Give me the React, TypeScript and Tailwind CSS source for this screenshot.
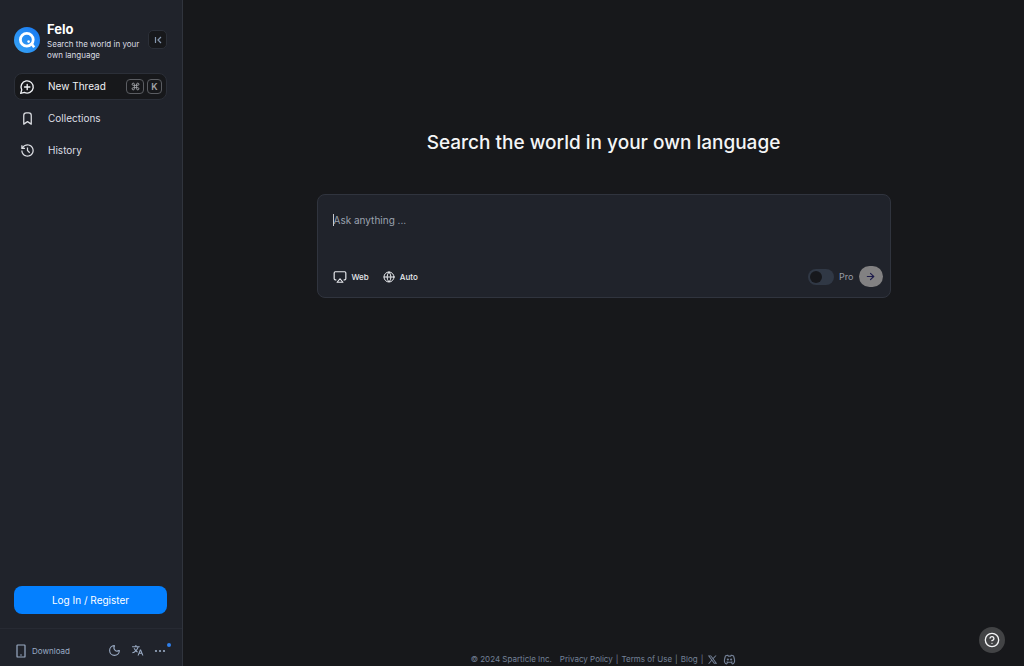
import { useState } from 'react';
import type { ReactNode } from 'react';
import { Airplay, ArrowRight, CircleHelp, Command, Globe, Moon } from 'lucide-react';
import { RiHistoryLine, RiTranslate2, RiTwitterXLine } from 'react-icons/ri';
import { TbBookmark, TbBrandDiscord } from 'react-icons/tb';

function Logo() {
  return (
    <svg viewBox="0 0 26 26" className="size-[26px] shrink-0" role="img" aria-label="Felo logo">
      <defs>
        <linearGradient id="logo-fill" x1="0" y1="1" x2="1" y2="0">
          <stop offset="0" stopColor="#38a5f5" />
          <stop offset="1" stopColor="#1777f2" />
        </linearGradient>
      </defs>
      <circle cx="13" cy="13" r="13" fill="url(#logo-fill)" />
      <circle cx="12.8" cy="12.8" r="6.4" fill="none" stroke="#fff" strokeWidth="2.8" />
      <path d="M17 16l3.2 4.2" stroke="#fff" strokeWidth="2.6" />
      <circle cx="14.6" cy="14.6" r="1.3" fill="#fff" />
    </svg>
  );
}

function NewThreadIcon() {
  return (
    <svg
      viewBox="0 0 24 24"
      className="mr-[13px] size-4"
      fill="none"
      stroke="currentColor"
      strokeWidth="2"
      strokeLinecap="round"
      strokeLinejoin="round"
      aria-hidden="true"
    >
      <path d="M2.5 21.5l1.6-5.1A9.2 9.2 0 1 1 8 20.2zM12.3 8v8M8.3 12h8" />
    </svg>
  );
}

function CollapseIcon() {
  return (
    <svg viewBox="0 0 10 10" className="size-[10px]" fill="none" stroke="currentColor" strokeWidth="1.2" aria-hidden="true">
      <path d="M2.5 2v6M8 2L5 5l3 3M5 5H4.4" />
    </svg>
  );
}

function PhoneIcon() {
  return (
    <svg viewBox="0 0 10 14" className="h-[14px] w-[10px]" fill="none" stroke="currentColor" strokeWidth="1.2" aria-hidden="true">
      <rect x="1" y="1" width="8" height="12" rx="0.6" />
      <path d="M4.2 11h1.6" />
    </svg>
  );
}

function DotsIcon() {
  return (
    <svg viewBox="0 0 12 4" className="h-1 w-3" fill="currentColor" aria-hidden="true">
      <circle cx="2" cy="2" r="1.1" />
      <circle cx="6" cy="2" r="1.1" />
      <circle cx="10" cy="2" r="1.1" />
    </svg>
  );
}

function Key({ children, wide = false }: { children: ReactNode; wide?: boolean }) {
  return (
    <kbd
      className={`flex h-[15px] items-center justify-center rounded-[4px] border border-[#5b5d62] font-['Inter',sans-serif] text-[9px] leading-none font-semibold text-[#a2a4a8] ${wide ? 'w-[18px]' : 'w-[15px]'}`}
    >
      {children}
    </kbd>
  );
}

function NavLink({ icon, label }: { icon: ReactNode; label: string }) {
  return (
    <a href="#" className="flex h-8 items-center gap-[13px] px-1.5 text-[10px] text-[#dcdee3]">
      {icon}
      {label}
    </a>
  );
}

function Sidebar() {
  return (
    <aside className="flex w-[183px] shrink-0 flex-col border-r border-[#30343d] bg-[#20232b]">
      <header className="flex items-start pt-[21px] pr-[15px] pl-3.5">
        <div className="pt-1.5">
          <Logo />
        </div>
        <div className="ml-[7px] w-[96px]">
          <h2 className="text-[13px] leading-4 font-bold text-white">Felo</h2>
          <p className="mt-0.5 text-[8px] leading-[11px] text-[#dcdee3]">Search the world in your own language</p>
        </div>
        <button
          type="button"
          aria-label="Collapse sidebar"
          className="mt-[9px] ml-auto flex size-[19px] items-center justify-center rounded-[5px] border border-[#2b2f38] bg-[#17181b] text-[#8596ad]"
        >
          <CollapseIcon />
        </button>
      </header>

      <nav className="mt-3 flex flex-col pr-[15px] pl-3.5" aria-label="Main">
        <a
          href="#"
          className="mb-0.5 flex h-[27px] items-center rounded-lg border border-[#2b2f38] bg-[#17181b] px-1 text-[10px] text-[#f0f2f5]"
        >
          <NewThreadIcon />
          New Thread
          <span className="ml-auto flex gap-[3px]">
            <Key wide>
              <Command className="size-[9px]" strokeWidth={2.4} aria-label="Command" />
            </Key>
            <Key>K</Key>
          </span>
        </a>
        <NavLink icon={<TbBookmark className="size-[15px]" />} label="Collections" />
        <NavLink icon={<RiHistoryLine className="size-[15px]" />} label="History" />
      </nav>

      <div className="mt-auto pr-[15px] pb-3.5 pl-3.5">
        <button type="button" className="h-7 w-full rounded-lg bg-[#0480ff] text-[10px] text-white">
          Log In / Register
        </button>
      </div>

      <footer className="flex h-[38px] items-center border-t border-[#272a33] pt-1.5 pr-3 pl-4 text-[#9aabc4]">
        <a href="#" className="flex items-center gap-1.5 text-[8px]">
          <PhoneIcon />
          Download
        </a>
        <div className="ml-auto flex items-center gap-2.5">
          <button type="button" aria-label="Toggle theme">
            <Moon className="size-[13px]" strokeWidth={2} />
          </button>
          <button type="button" aria-label="Change language">
            <RiTranslate2 className="size-[13px]" />
          </button>
          <button type="button" aria-label="More" className="relative flex h-[13px] w-4 items-center">
            <DotsIcon />
            <span className="absolute -top-px -right-px size-1 rounded-full bg-[#2f80ed]" />
          </button>
        </div>
      </footer>
    </aside>
  );
}

function SearchBox() {
  const [query, setQuery] = useState('');
  return (
    <form className="mt-[39px] w-full max-w-[574px] rounded-lg border border-[#30343e] bg-[#20232b] pt-[17px] pr-[7px] pb-2.5 pl-[15px]">
      <div className="flex items-start">
        {query === '' && <span className="mt-0.5 h-3 w-px bg-[#c5c8ce]" aria-hidden="true" />}
        <textarea
          aria-label="Ask anything"
          placeholder="Ask anything ..."
          value={query}
          onChange={(event) => setQuery(event.target.value)}
          className="block h-[54px] w-full resize-none bg-transparent text-[10px] leading-4 text-white outline-none placeholder:text-[#9ba2af]"
        />
      </div>
      <div className="flex items-center text-[#e8eaee]">
        <button type="button" className="flex items-center gap-[5px] text-[8px] font-medium">
          <Airplay className="size-[14px]" strokeWidth={2} />
          Web
        </button>
        <button type="button" className="ml-[14px] flex items-center gap-[5px] text-[8px] font-medium">
          <Globe className="size-3" strokeWidth={2} />
          Auto
        </button>
        <label className="ml-auto flex items-center gap-[5px] text-[9px] text-[#9a9ea7]">
          <input
            type="checkbox"
            role="switch"
            className="h-4 w-[26px] appearance-none rounded-full bg-[#303845] before:m-0.5 before:block before:size-3 before:rounded-full before:bg-[#17181c] checked:bg-[#0480ff] checked:before:translate-x-2.5"
          />
          Pro
        </label>
        <button
          type="submit"
          aria-label="Send"
          disabled={query === ''}
          className="ml-[5px] flex h-[21px] w-6 items-center justify-center rounded-full bg-[#828182] text-[#1d1b4b]"
        >
          <ArrowRight className="size-[11px]" strokeWidth={2.4} />
        </button>
      </div>
    </form>
  );
}

function SiteFooter() {
  return (
    <footer className="mt-auto flex h-[14px] items-center text-[8px] leading-[14px] text-[#748197]">
      <span className="mr-2">© 2024 Sparticle Inc.</span>
      <div className="flex items-center gap-[3px]">
        <a href="#">Privacy Policy</a>
        <span>|</span>
        <a href="#">Terms of Use</a>
        <span>|</span>
        <a href="#">Blog</a>
        <span>|</span>
        <a href="#" aria-label="X" className="ml-px">
          <RiTwitterXLine className="size-[11px]" />
        </a>
        <a href="#" aria-label="Discord" className="ml-0.5">
          <TbBrandDiscord className="size-[13px]" />
        </a>
      </div>
    </footer>
  );
}

export default function App() {
  return (
    <div className="flex min-h-screen bg-[#17181b] font-['Inter','Noto_Sans',sans-serif]">
      <Sidebar />
      <main className="flex min-w-0 flex-1 flex-col items-center px-4 pt-[131px]">
        <h1 className="text-[19px] leading-6 font-medium text-[#f4f5f6]">Search the world in your own language</h1>
        <SearchBox />
        <SiteFooter />
      </main>
      <button
        type="button"
        aria-label="Help"
        className="fixed right-[19px] bottom-[13px] flex size-[26px] items-center justify-center rounded-full bg-[#424345] text-[#f4f5f6]"
      >
        <CircleHelp className="size-4" strokeWidth={2} />
      </button>
    </div>
  );
}
